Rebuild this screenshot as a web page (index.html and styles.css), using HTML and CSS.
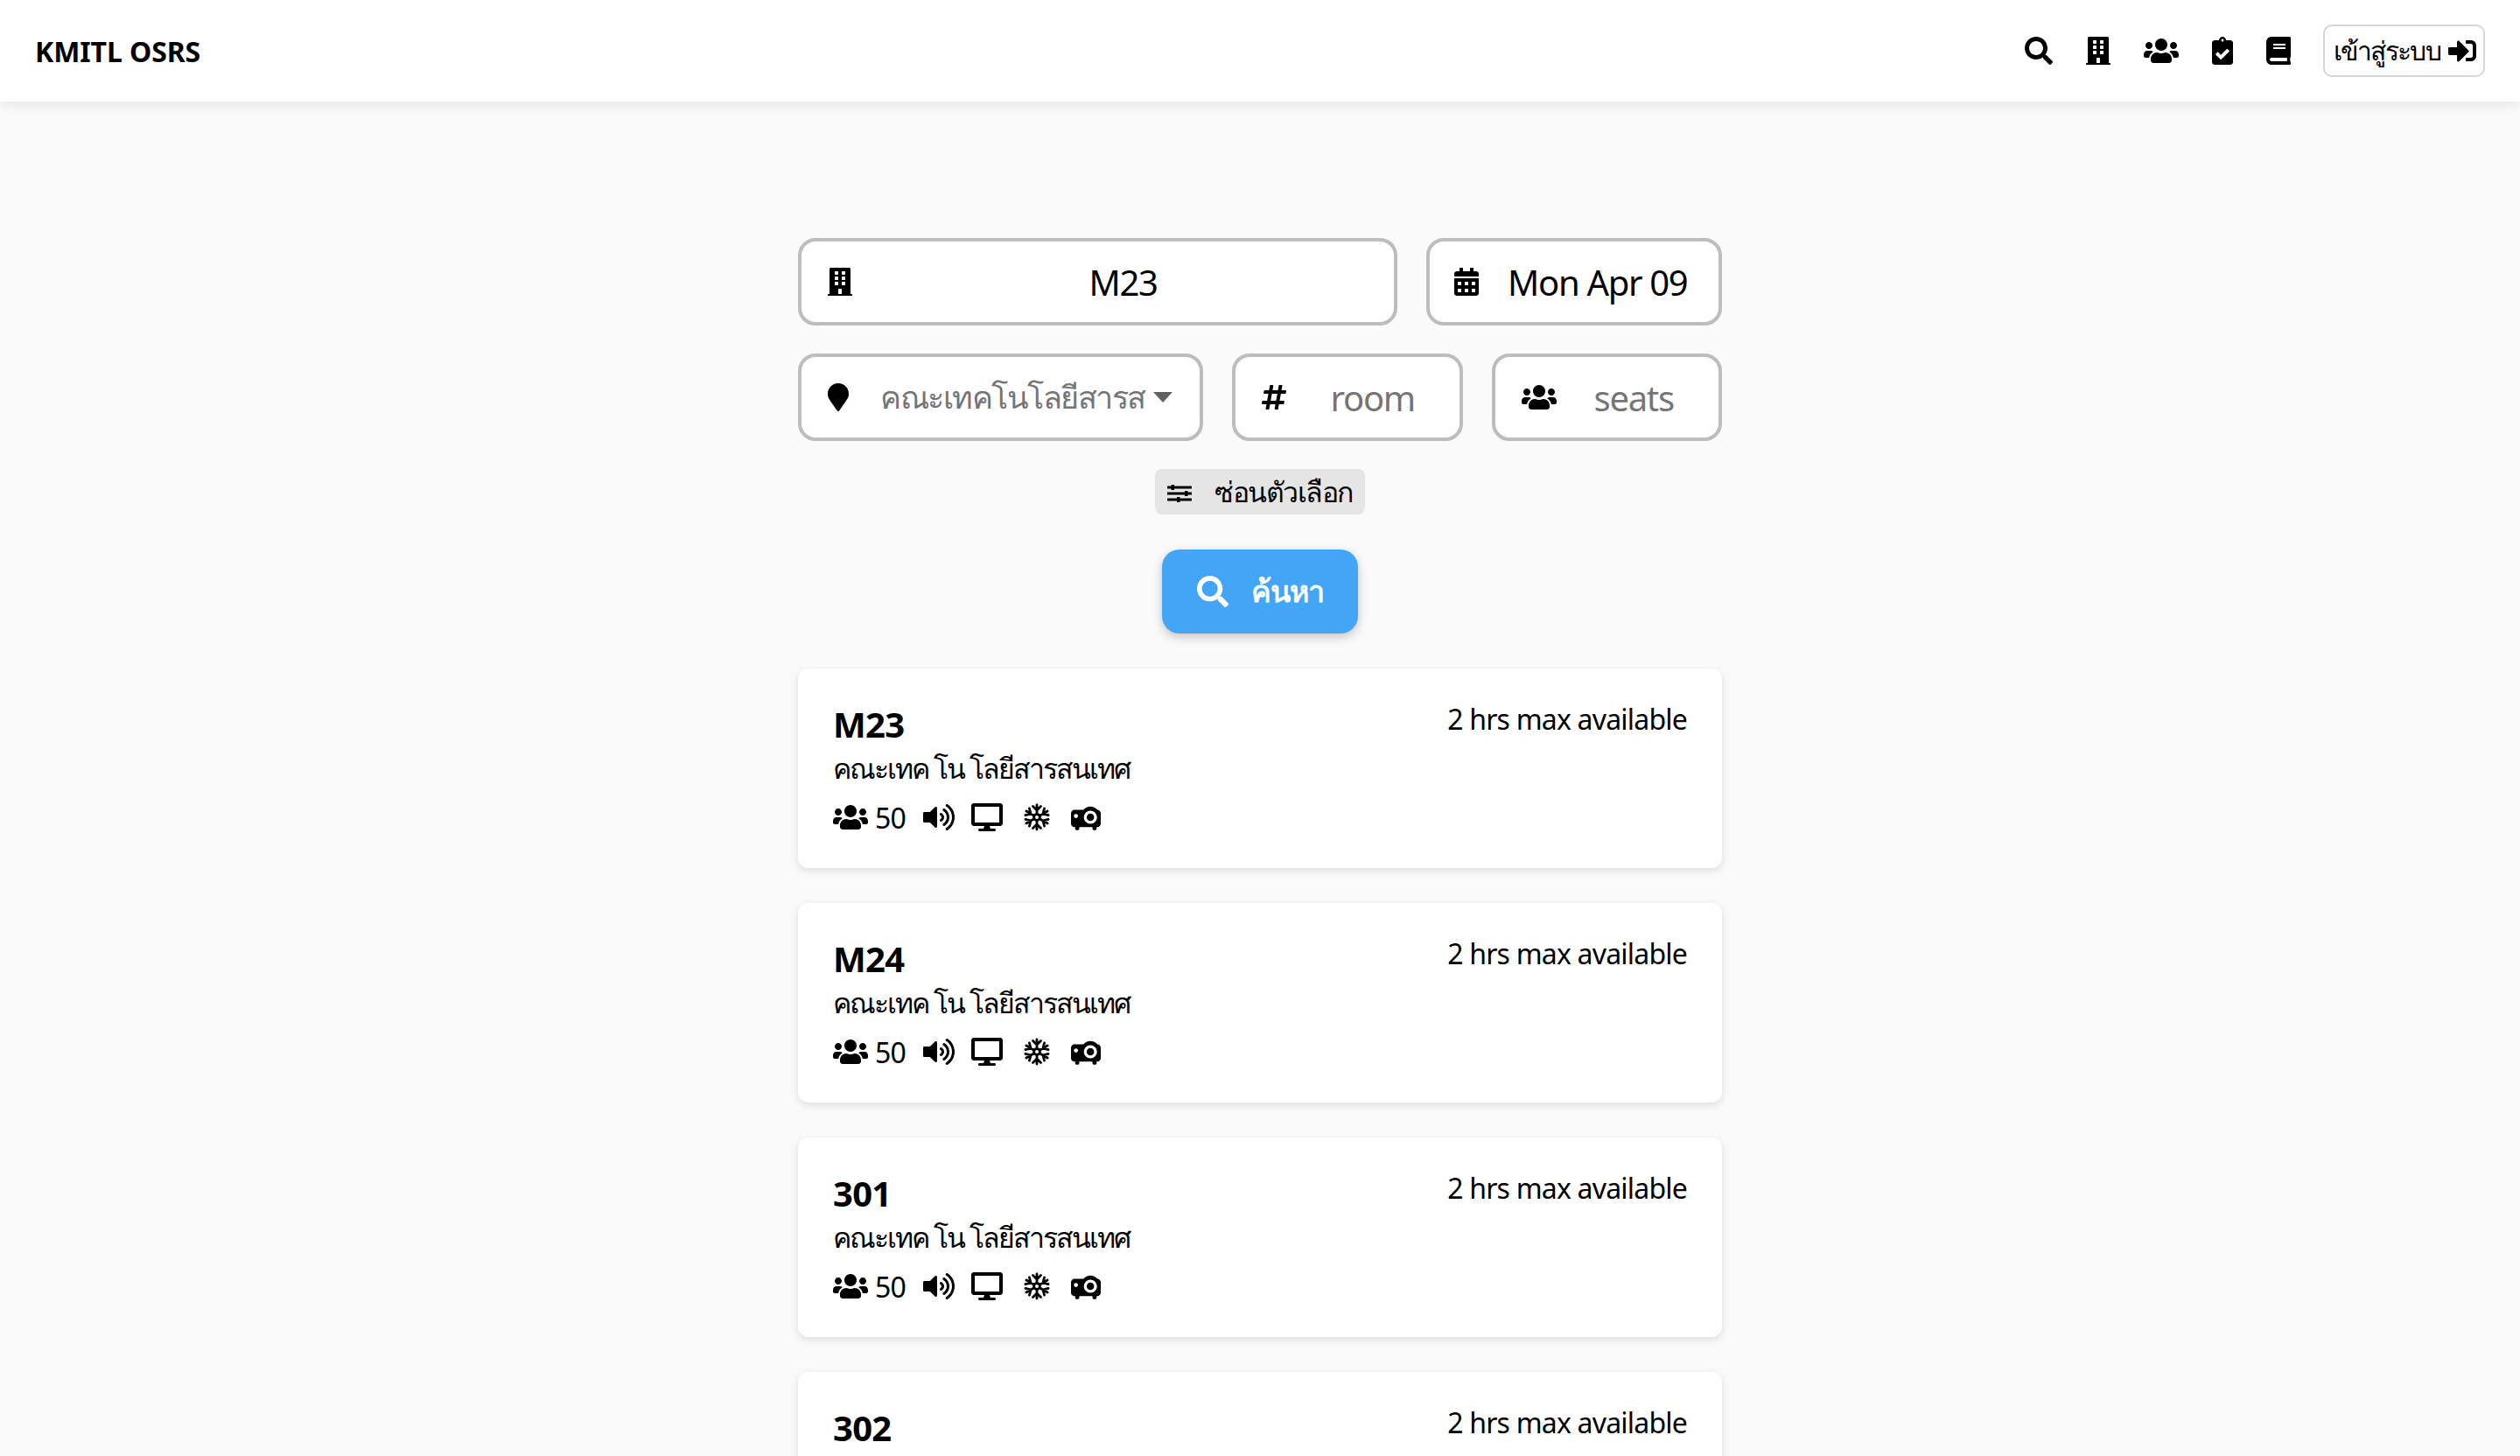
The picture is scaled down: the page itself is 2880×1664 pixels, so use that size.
FILE: index.html
```html
<!DOCTYPE html>
<html lang="th">
<head>
  <meta charset="UTF-8">
  <meta name="viewport" content="width=device-width, initial-scale=1.0">
  <title>KMITL OSRS</title>
  <link rel="stylesheet" href="styles.css">
</head>
<body>

  <!-- icon set, used through <use> below -->
  <svg class="icon-defs" xmlns="http://www.w3.org/2000/svg">
    <symbol id="i-search" viewBox="0 0 512 512"><path d="M505 442.7L405.3 343c-4.5-4.5-10.6-7-17-7H372c27.6-35.3 44-79.7 44-128C416 93.1 322.9 0 208 0S0 93.1 0 208s93.1 208 208 208c48.3 0 92.7-16.4 128-44v16.3c0 6.4 2.5 12.5 7 17l99.7 99.7c9.4 9.4 24.6 9.4 33.9 0l28.3-28.3c9.4-9.4 9.4-24.6.1-34zM208 336c-70.7 0-128-57.2-128-128 0-70.7 57.2-128 128-128 70.7 0 128 57.2 128 128 0 70.7-57.2 128-128 128z"/></symbol>
    <symbol id="i-building" viewBox="0 0 448 512"><path d="M436 480h-20V24c0-13.255-10.745-24-24-24H56C42.745 0 32 10.745 32 24v456H12c-6.627 0-12 5.373-12 12v20h448v-20c0-6.627-5.373-12-12-12zM128 76c0-6.627 5.373-12 12-12h40c6.627 0 12 5.373 12 12v40c0 6.627-5.373 12-12 12h-40c-6.627 0-12-5.373-12-12V76zm0 96c0-6.627 5.373-12 12-12h40c6.627 0 12 5.373 12 12v40c0 6.627-5.373 12-12 12h-40c-6.627 0-12-5.373-12-12v-40zm52 148h-40c-6.627 0-12-5.373-12-12v-40c0-6.627 5.373-12 12-12h40c6.627 0 12 5.373 12 12v40c0 6.627-5.373 12-12 12zm76 160h-64v-84c0-6.627 5.373-12 12-12h40c6.627 0 12 5.373 12 12v84zm64-172c0 6.627-5.373 12-12 12h-40c-6.627 0-12-5.373-12-12v-40c0-6.627 5.373-12 12-12h40c6.627 0 12 5.373 12 12v40zm0-96c0 6.627-5.373 12-12 12h-40c-6.627 0-12-5.373-12-12v-40c0-6.627 5.373-12 12-12h40c6.627 0 12 5.373 12 12v40zm0-96c0 6.627-5.373 12-12 12h-40c-6.627 0-12-5.373-12-12V76c0-6.627 5.373-12 12-12h40c6.627 0 12 5.373 12 12v40z"/></symbol>
    <symbol id="i-users" viewBox="0 0 640 512"><path d="M96 224c35.3 0 64-28.7 64-64s-28.7-64-64-64-64 28.7-64 64 28.7 64 64 64zm448 0c35.3 0 64-28.7 64-64s-28.7-64-64-64-64 28.7-64 64 28.7 64 64 64zm32 32h-64c-17.6 0-33.5 7.1-45.1 18.6 40.3 22.1 68.9 62 75.1 109.4h66c17.7 0 32-14.3 32-32v-32c0-35.3-28.7-64-64-64zm-256 0c61.9 0 112-50.1 112-112S381.9 32 320 32 208 82.1 208 144s50.1 112 112 112zm76.8 32h-8.3c-20.8 10-43.9 16-68.5 16s-47.6-6-68.5-16h-8.3C179.6 288 128 339.6 128 403.2V432c0 26.5 21.5 48 48 48h288c26.5 0 48-21.5 48-48v-28.8c0-63.6-51.6-115.2-115.2-115.2zm-223.7-13.4C161.5 263.1 145.6 256 128 256H64c-35.3 0-64 28.7-64 64v32c0 17.7 14.3 32 32 32h65.9c6.3-47.4 34.9-87.3 75.2-109.4z"/></symbol>
    <symbol id="i-clipboard" viewBox="0 0 384 512"><path d="M336 64h-80c0-35.3-28.7-64-64-64s-64 28.7-64 64H48C21.5 64 0 85.5 0 112v352c0 26.5 21.5 48 48 48h288c26.5 0 48-21.5 48-48V112c0-26.5-21.5-48-48-48zM192 40c13.3 0 24 10.7 24 24s-10.7 24-24 24-24-10.7-24-24 10.7-24 24-24zm121.2 231.8l-143 141.8c-4.7 4.7-12.3 4.6-17-.1l-82.6-83.3c-4.7-4.7-4.6-12.3.1-17L99.1 285c4.7-4.7 12.3-4.6 17 .1l46 46.4 106-105.2c4.7-4.7 12.3-4.6 17 .1l28.2 28.4c4.7 4.8 4.6 12.3-.1 17z"/></symbol>
    <symbol id="i-book" viewBox="0 0 448 512"><path d="M448 360V24c0-13.3-10.7-24-24-24H96C43 0 0 43 0 96v320c0 53 43 96 96 96h328c13.3 0 24-10.7 24-24v-16c0-7.5-3.5-14.3-8.9-18.7-4.2-15.4-4.2-59.3 0-74.7 5.4-4.3 8.9-11.1 8.9-18.6zM128 134c0-3.3 2.7-6 6-6h212c3.3 0 6 2.7 6 6v20c0 3.3-2.7 6-6 6H134c-3.3 0-6-2.7-6-6v-20zm0 64c0-3.3 2.7-6 6-6h212c3.3 0 6 2.7 6 6v20c0 3.3-2.7 6-6 6H134c-3.3 0-6-2.7-6-6v-20zm253.4 250H96c-17.7 0-32-14.3-32-32 0-17.6 14.4-32 32-32h285.4c-1.9 17.1-1.9 46.9 0 64z"/></symbol>
    <symbol id="i-signin" viewBox="0 0 512 512"><path d="M416 448h-84c-6.6 0-12-5.4-12-12v-40c0-6.6 5.4-12 12-12h84c17.7 0 32-14.3 32-32V160c0-17.7-14.3-32-32-32h-84c-6.6 0-12-5.4-12-12V76c0-6.6 5.4-12 12-12h84c53 0 96 43 96 96v192c0 53-43 96-96 96zm-47-201L201 79c-15-15-41-4.5-41 17v96H24c-13.3 0-24 10.7-24 24v96c0 13.3 10.7 24 24 24h136v96c0 21.5 26 32 41 17l168-168c9.3-9.4 9.3-24.6 0-34z"/></symbol>
    <symbol id="i-calendar" viewBox="0 0 448 512"><path d="M0 464c0 26.5 21.5 48 48 48h352c26.5 0 48-21.5 48-48V192H0v272zm320-196c0-6.6 5.4-12 12-12h40c6.6 0 12 5.4 12 12v40c0 6.6-5.4 12-12 12h-40c-6.6 0-12-5.4-12-12v-40zm0 128c0-6.6 5.4-12 12-12h40c6.6 0 12 5.4 12 12v40c0 6.6-5.4 12-12 12h-40c-6.6 0-12-5.4-12-12v-40zM192 268c0-6.6 5.4-12 12-12h40c6.6 0 12 5.4 12 12v40c0 6.6-5.4 12-12 12h-40c-6.6 0-12-5.4-12-12v-40zm0 128c0-6.6 5.4-12 12-12h40c6.6 0 12 5.4 12 12v40c0 6.6-5.4 12-12 12h-40c-6.6 0-12-5.4-12-12v-40zM64 268c0-6.6 5.4-12 12-12h40c6.6 0 12 5.4 12 12v40c0 6.6-5.4 12-12 12H76c-6.6 0-12-5.4-12-12v-40zm0 128c0-6.6 5.4-12 12-12h40c6.6 0 12 5.4 12 12v40c0 6.6-5.4 12-12 12H76c-6.6 0-12-5.4-12-12v-40zM400 64h-48V16c0-8.8-7.2-16-16-16h-32c-8.8 0-16 7.2-16 16v48H160V16c0-8.8-7.2-16-16-16h-32c-8.8 0-16 7.2-16 16v48H48C21.5 64 0 85.5 0 112v48h448v-48c0-26.5-21.5-48-48-48z"/></symbol>
    <symbol id="i-marker" viewBox="0 0 384 512"><path d="M172.268 501.67C26.97 291.031 0 269.413 0 192 0 85.961 85.961 0 192 0s192 85.961 192 192c0 77.413-26.97 99.031-172.268 309.67-9.535 13.774-29.93 13.773-39.464 0z"/></symbol>
    <symbol id="i-hash" viewBox="0 0 448 512"><path d="M440.667 182.109l7.143-40c1.313-7.355-4.342-14.109-11.813-14.109h-74.81l14.623-81.891C377.123 38.754 371.468 32 363.997 32h-40.632a12 12 0 0 0-11.813 9.891L296.175 128H197.54l14.623-81.891C213.477 38.754 207.822 32 200.35 32h-40.632a12 12 0 0 0-11.813 9.891L132.528 128H53.432a12 12 0 0 0-11.813 9.891l-7.143 40C33.163 185.246 38.818 192 46.289 192h74.81L98.242 320H19.146a12 12 0 0 0-11.813 9.891l-7.143 40C-1.123 377.246 4.532 384 12.003 384h74.81L72.19 465.891C70.877 473.246 76.532 480 84.003 480h40.632a12 12 0 0 0 11.813-9.891L151.825 384h98.634l-14.623 81.891C234.523 473.246 240.178 480 247.65 480h40.632a12 12 0 0 0 11.813-9.891L315.472 384h79.096a12 12 0 0 0 11.813-9.891l7.143-40c1.313-7.355-4.342-14.109-11.813-14.109h-74.81l22.857-128h79.096a12 12 0 0 0 11.813-9.891zM261.889 320h-98.634l22.857-128h98.634l-22.857 128z"/></symbol>
    <symbol id="i-sliders" viewBox="0 0 28 22"><path d="M0 2.500h28v3H0zM0 9.500h28v3H0zM0 16.500h28v3H0zM4.500 1h3.500v6H4.500zM20 8h3.500v6H20zM11 15h3.500v6H11z"/></symbol>
    <symbol id="i-volume" viewBox="0 0 576 512"><path d="M215.03 71.05L126.06 160H24c-13.26 0-24 10.74-24 24v144c0 13.25 10.74 24 24 24h102.06l88.97 88.95c15.03 15.03 40.97 4.47 40.97-16.97V88.02c0-21.46-25.96-31.98-40.97-16.97zm233.32-51.08c-11.17-7.33-26.18-4.24-33.51 6.95-7.34 11.17-4.22 26.18 6.95 33.51 66.27 43.49 105.82 116.6 105.82 195.58 0 78.98-39.55 152.09-105.82 195.58-11.17 7.32-14.29 22.34-6.95 33.5 7.04 10.71 21.93 14.56 33.51 6.95C528.27 439.58 576 351.33 576 256S528.27 72.43 448.35 19.97zM480 256c0-63.53-32.06-121.94-85.77-156.24-11.19-7.14-26.03-3.82-33.12 7.46s-3.78 26.21 7.41 33.36C408.27 165.97 432 209.11 432 256s-23.73 90.03-63.48 115.42c-11.19 7.14-14.5 22.07-7.41 33.36 6.51 10.36 21.12 15.14 33.12 7.46C447.94 377.94 480 319.54 480 256zm-141.77-76.87c-11.58-6.33-26.19-2.16-32.61 9.45-6.39 11.61-2.16 26.2 9.45 32.61C327.98 228.28 336 241.63 336 256c0 14.38-8.02 27.72-20.92 34.81-11.61 6.41-15.84 21-9.45 32.61 6.43 11.66 21.05 15.8 32.61 9.45 28.23-15.55 45.77-45 45.77-76.88s-17.54-61.32-45.78-76.86z"/></symbol>
    <symbol id="i-desktop" viewBox="0 0 576 512"><path d="M528 0H48C21.5 0 0 21.5 0 48v320c0 26.5 21.5 48 48 48h192l-16 48h-72c-13.3 0-24 10.7-24 24s10.7 24 24 24h272c13.3 0 24-10.7 24-24s-10.7-24-24-24h-72l-16-48h192c26.5 0 48-21.5 48-48V48c0-26.5-21.5-48-48-48zm-16 352H64V64h448v288z"/></symbol>
    <symbol id="i-snow" viewBox="0 0 32 32">
      <g fill="none" stroke="#000" stroke-width="2.8" stroke-linecap="round">
        <circle cx="16" cy="16" r="3.400"/>
        <path d="M16 2v10M16 20v10M11.500 3.500l4.500 4.500 4.500-4.500M11.500 28.500l4.500-4.500 4.500 4.500"/>
        <path transform="rotate(60 16 16)" d="M16 2v10M16 20v10M11.500 3.500l4.500 4.500 4.500-4.500M11.500 28.500l4.500-4.500 4.500 4.500"/>
        <path transform="rotate(120 16 16)" d="M16 2v10M16 20v10M11.500 3.500l4.500 4.500 4.500-4.500M11.500 28.500l4.500-4.500 4.500 4.500"/>
      </g>
    </symbol>
    <symbol id="i-projector" viewBox="0 0 36 32"><path fill-rule="evenodd" d="M4 7h11a11 11 0 0 1 17 0c2 0 4 2 4 4v13c0 2-2 4-4 4h-1v2a1.500 1.500 0 0 1-1.500 1.500h-2A1.500 1.500 0 0 1 26 30v-2H10v2a1.500 1.500 0 0 1-1.500 1.500h-2A1.500 1.500 0 0 1 5 30v-2H4c-2 0-4-2-4-4V11c0-2 2-4 4-4zm19.500 1a8 8 0 1 0 0 16 8 8 0 0 0 0-16zm0 3.500a4.500 4.500 0 1 1 0 9 4.500 4.500 0 0 1 0-9zM6 12a2.500 2.500 0 1 0 0 5 2.500 2.500 0 0 0 0-5z"/></symbol>
  </svg>

  <nav class="navbar">
    <span class="brand">KMITL OSRS</span>
    <div class="nav-links">
      <svg class="icon nav-search"><use href="#i-search"/></svg>
      <svg class="icon nav-building"><use href="#i-building"/></svg>
      <svg class="icon nav-users"><use href="#i-users"/></svg>
      <svg class="icon nav-clipboard"><use href="#i-clipboard"/></svg>
      <svg class="icon nav-book"><use href="#i-book"/></svg>
      <a class="login-btn"><span class="login-text">เข้าสู่ระบบ</span> <svg class="icon nav-signin"><use href="#i-signin"/></svg></a>
    </div>
  </nav>

  <main class="container">
    <div class="form-row">
      <div class="field field-building">
        <svg class="icon w28"><use href="#i-building"/></svg>
        <span class="field-text center">M23</span>
      </div>
      <div class="field field-date">
        <svg class="icon w28"><use href="#i-calendar"/></svg>
        <span class="field-text date-text">Mon Apr 09</span>
      </div>
    </div>

    <div class="form-row">
      <div class="field field-faculty">
        <svg class="icon w24"><use href="#i-marker"/></svg>
        <span class="field-text muted faculty-text">คณะเทคโนโลยีสารส</span>
        <span class="caret"></span>
      </div>
      <div class="field field-small">
        <svg class="icon w28"><use href="#i-hash"/></svg>
        <span class="field-text muted center">room</span>
      </div>
      <div class="field field-small">
        <svg class="icon w40"><use href="#i-users"/></svg>
        <span class="field-text muted center seats-text">seats</span>
      </div>
    </div>

    <button class="toggle-btn">
      <svg class="icon sliders"><use href="#i-sliders"/></svg>
      <span class="toggle-text">ซ่อนตัวเลือก</span>
    </button>

    <button class="search-btn">
      <svg class="icon search-icon"><use href="#i-search"/></svg>
      <span class="search-text">ค้นหา</span>
    </button>

    <section class="room-card">
      <div class="room-info">
        <h3>M23</h3>
        <p>คณะเทค<span class="thai-gap">โน</span><span class="thai-gap">โลยีสารสนเทศ</span></p>
        <div class="room-meta">
          <svg class="icon w40"><use href="#i-users"/></svg><span class="seats-num">50</span>
          <svg class="icon m-volume"><use href="#i-volume"/></svg>
          <svg class="icon m-desktop"><use href="#i-desktop"/></svg>
          <svg class="icon m-snow"><use href="#i-snow"/></svg>
          <svg class="icon m-projector"><use href="#i-projector"/></svg>
        </div>
      </div>
      <span class="room-hours">2 hrs max available</span>
    </section>

    <section class="room-card">
      <div class="room-info">
        <h3>M24</h3>
        <p>คณะเทค<span class="thai-gap">โน</span><span class="thai-gap">โลยีสารสนเทศ</span></p>
        <div class="room-meta">
          <svg class="icon w40"><use href="#i-users"/></svg><span class="seats-num">50</span>
          <svg class="icon m-volume"><use href="#i-volume"/></svg>
          <svg class="icon m-desktop"><use href="#i-desktop"/></svg>
          <svg class="icon m-snow"><use href="#i-snow"/></svg>
          <svg class="icon m-projector"><use href="#i-projector"/></svg>
        </div>
      </div>
      <span class="room-hours">2 hrs max available</span>
    </section>

    <section class="room-card">
      <div class="room-info">
        <h3>301</h3>
        <p>คณะเทค<span class="thai-gap">โน</span><span class="thai-gap">โลยีสารสนเทศ</span></p>
        <div class="room-meta">
          <svg class="icon w40"><use href="#i-users"/></svg><span class="seats-num">50</span>
          <svg class="icon m-volume"><use href="#i-volume"/></svg>
          <svg class="icon m-desktop"><use href="#i-desktop"/></svg>
          <svg class="icon m-snow"><use href="#i-snow"/></svg>
          <svg class="icon m-projector"><use href="#i-projector"/></svg>
        </div>
      </div>
      <span class="room-hours">2 hrs max available</span>
    </section>

    <section class="room-card">
      <div class="room-info">
        <h3>302</h3>
        <p>คณะเทค<span class="thai-gap">โน</span><span class="thai-gap">โลยีสารสนเทศ</span></p>
        <div class="room-meta">
          <svg class="icon w40"><use href="#i-users"/></svg><span class="seats-num">50</span>
          <svg class="icon m-volume"><use href="#i-volume"/></svg>
          <svg class="icon m-desktop"><use href="#i-desktop"/></svg>
          <svg class="icon m-snow"><use href="#i-snow"/></svg>
          <svg class="icon m-projector"><use href="#i-projector"/></svg>
        </div>
      </div>
      <span class="room-hours">2 hrs max available</span>
    </section>
  </main>

</body>
</html>
```

FILE: styles.css
```css
html, body {
  height: 100%;
}

body {
  margin: 0;
  overflow: hidden;
  background-color: #fafafa;
  color: #000;
  font-family: "Noto Sans", "Open Sans", sans-serif;
  font-size: 32px;
}

.icon-defs {
  display: none;
}

.icon {
  display: block;
  flex: none;
  height: 32px;
  fill: currentColor;
}

.w24 { width: 24px; }
.w28 { width: 28px; }
.w40 { width: 40px; }

/* navbar */
.navbar {
  display: flex;
  justify-content: space-between;
  align-items: center;
  height: 116px;
  padding: 0 40px;
  background-color: #fff;
  box-shadow: 0 2px 16px rgba(0, 0, 0, 0.1);
  box-sizing: border-box;
}

.brand {
  font-size: 32px;
  font-weight: 700;
  letter-spacing: -0.1px;
}

.nav-links {
  display: flex;
  align-items: center;
}

.nav-search { width: 32px; margin-right: 38px; }
.nav-building { width: 28px; margin-right: 38px; }
.nav-users { width: 40px; margin-right: 38px; }
.nav-clipboard { width: 24px; margin-right: 38px; }
.nav-book { width: 28px; margin-right: 37px; }
.nav-signin { width: 32px; }

.login-btn {
  display: flex;
  align-items: center;
  gap: 9px;
  height: 56px;
  padding: 0 8px 0 10px;
  border: 2px solid #d6d6d6;
  border-radius: 10px;
  white-space: nowrap;
}

.login-text {
  font-size: 30px;
  letter-spacing: -1.7px;
}

/* search form */
.container {
  display: flex;
  flex-direction: column;
  align-items: center;
  width: 1056px;
  margin: 156px auto 0;
}

.form-row {
  display: flex;
  gap: 33px;
  width: 100%;
  margin-bottom: 32px;
}

.field {
  display: flex;
  align-items: center;
  height: 100px;
  padding: 0 30px;
  background-color: #fff;
  border: 4px solid #bdbdbd;
  border-radius: 20px;
  box-sizing: border-box;
}

.field-building { flex: 1; }
.field-date { width: 338px; padding: 0 28px; }
.field-faculty { width: 463px; }
.field-small { flex: 1; }

.field-text {
  font-size: 40px;
  letter-spacing: -1.3px;
  white-space: nowrap;
}

.center {
  flex: 1;
  margin-left: 30px;
  text-align: center;
}

.seats-text {
  margin-left: 22px;
}

.muted {
  color: #757575;
}

.date-text {
  margin-left: 33px;
}

.faculty-text {
  margin-left: 36px;
  font-size: 36px;
  letter-spacing: -1.5px;
}

.caret {
  width: 0;
  height: 0;
  margin-left: 9px;
  border-top: 12px solid #616161;
  border-left: 11px solid transparent;
  border-right: 11px solid transparent;
}

/* buttons */
button {
  font-family: inherit;
  border: none;
  display: flex;
  align-items: center;
}

.toggle-btn {
  justify-content: center;
  width: 240px;
  height: 52px;
  margin-bottom: 40px;
  background-color: #e5e5e5;
  border-radius: 8px;
  font-size: 32px;
  color: #000;
  white-space: nowrap;
}

.toggle-text {
  letter-spacing: -1.5px;
}

.sliders {
  width: 28px;
  height: 22px;
  margin: 4px 26px 0 0;
}

.search-btn {
  justify-content: center;
  width: 224px;
  height: 96px;
  margin-bottom: 40px;
  background-color: #42a5f5;
  border-radius: 20px;
  box-shadow: 0 4px 12px rgba(0, 0, 0, 0.22);
  color: #fff;
  font-size: 34px;
  font-weight: 700;
}

.search-text {
  letter-spacing: -1px;
}

.search-icon {
  width: 36px;
  height: 36px;
  margin-right: 26px;
}

/* room cards */
.room-card {
  display: flex;
  justify-content: space-between;
  flex: none;
  width: 100%;
  height: 228px;
  margin-bottom: 40px;
  padding: 40px;
  background-color: #fff;
  border-radius: 12px;
  box-shadow: 0 3px 10px rgba(0, 0, 0, 0.12);
  box-sizing: border-box;
}

.room-card h3 {
  margin: 0;
  font-size: 40px;
  line-height: 48px;
  font-weight: 700;
  letter-spacing: -0.7px;
}

.room-card p {
  margin: 0;
  font-size: 32px;
  line-height: 52px;
  letter-spacing: -2px;
}

.thai-gap {
  margin-left: 6px;
}

.room-meta {
  display: flex;
  align-items: center;
  height: 48px;
  margin-top: 6px;
}

.seats-num {
  margin-left: 8px;
  margin-right: 20px;
  letter-spacing: -0.8px;
}

.m-volume { width: 36px; margin-right: 19px; }
.m-desktop { width: 36px; margin-right: 23px; }
.m-snow { width: 32px; margin-right: 23px; }
.m-projector { width: 34px; }

.room-hours {
  line-height: 36px;
  letter-spacing: -0.8px;
  white-space: nowrap;
}
```
